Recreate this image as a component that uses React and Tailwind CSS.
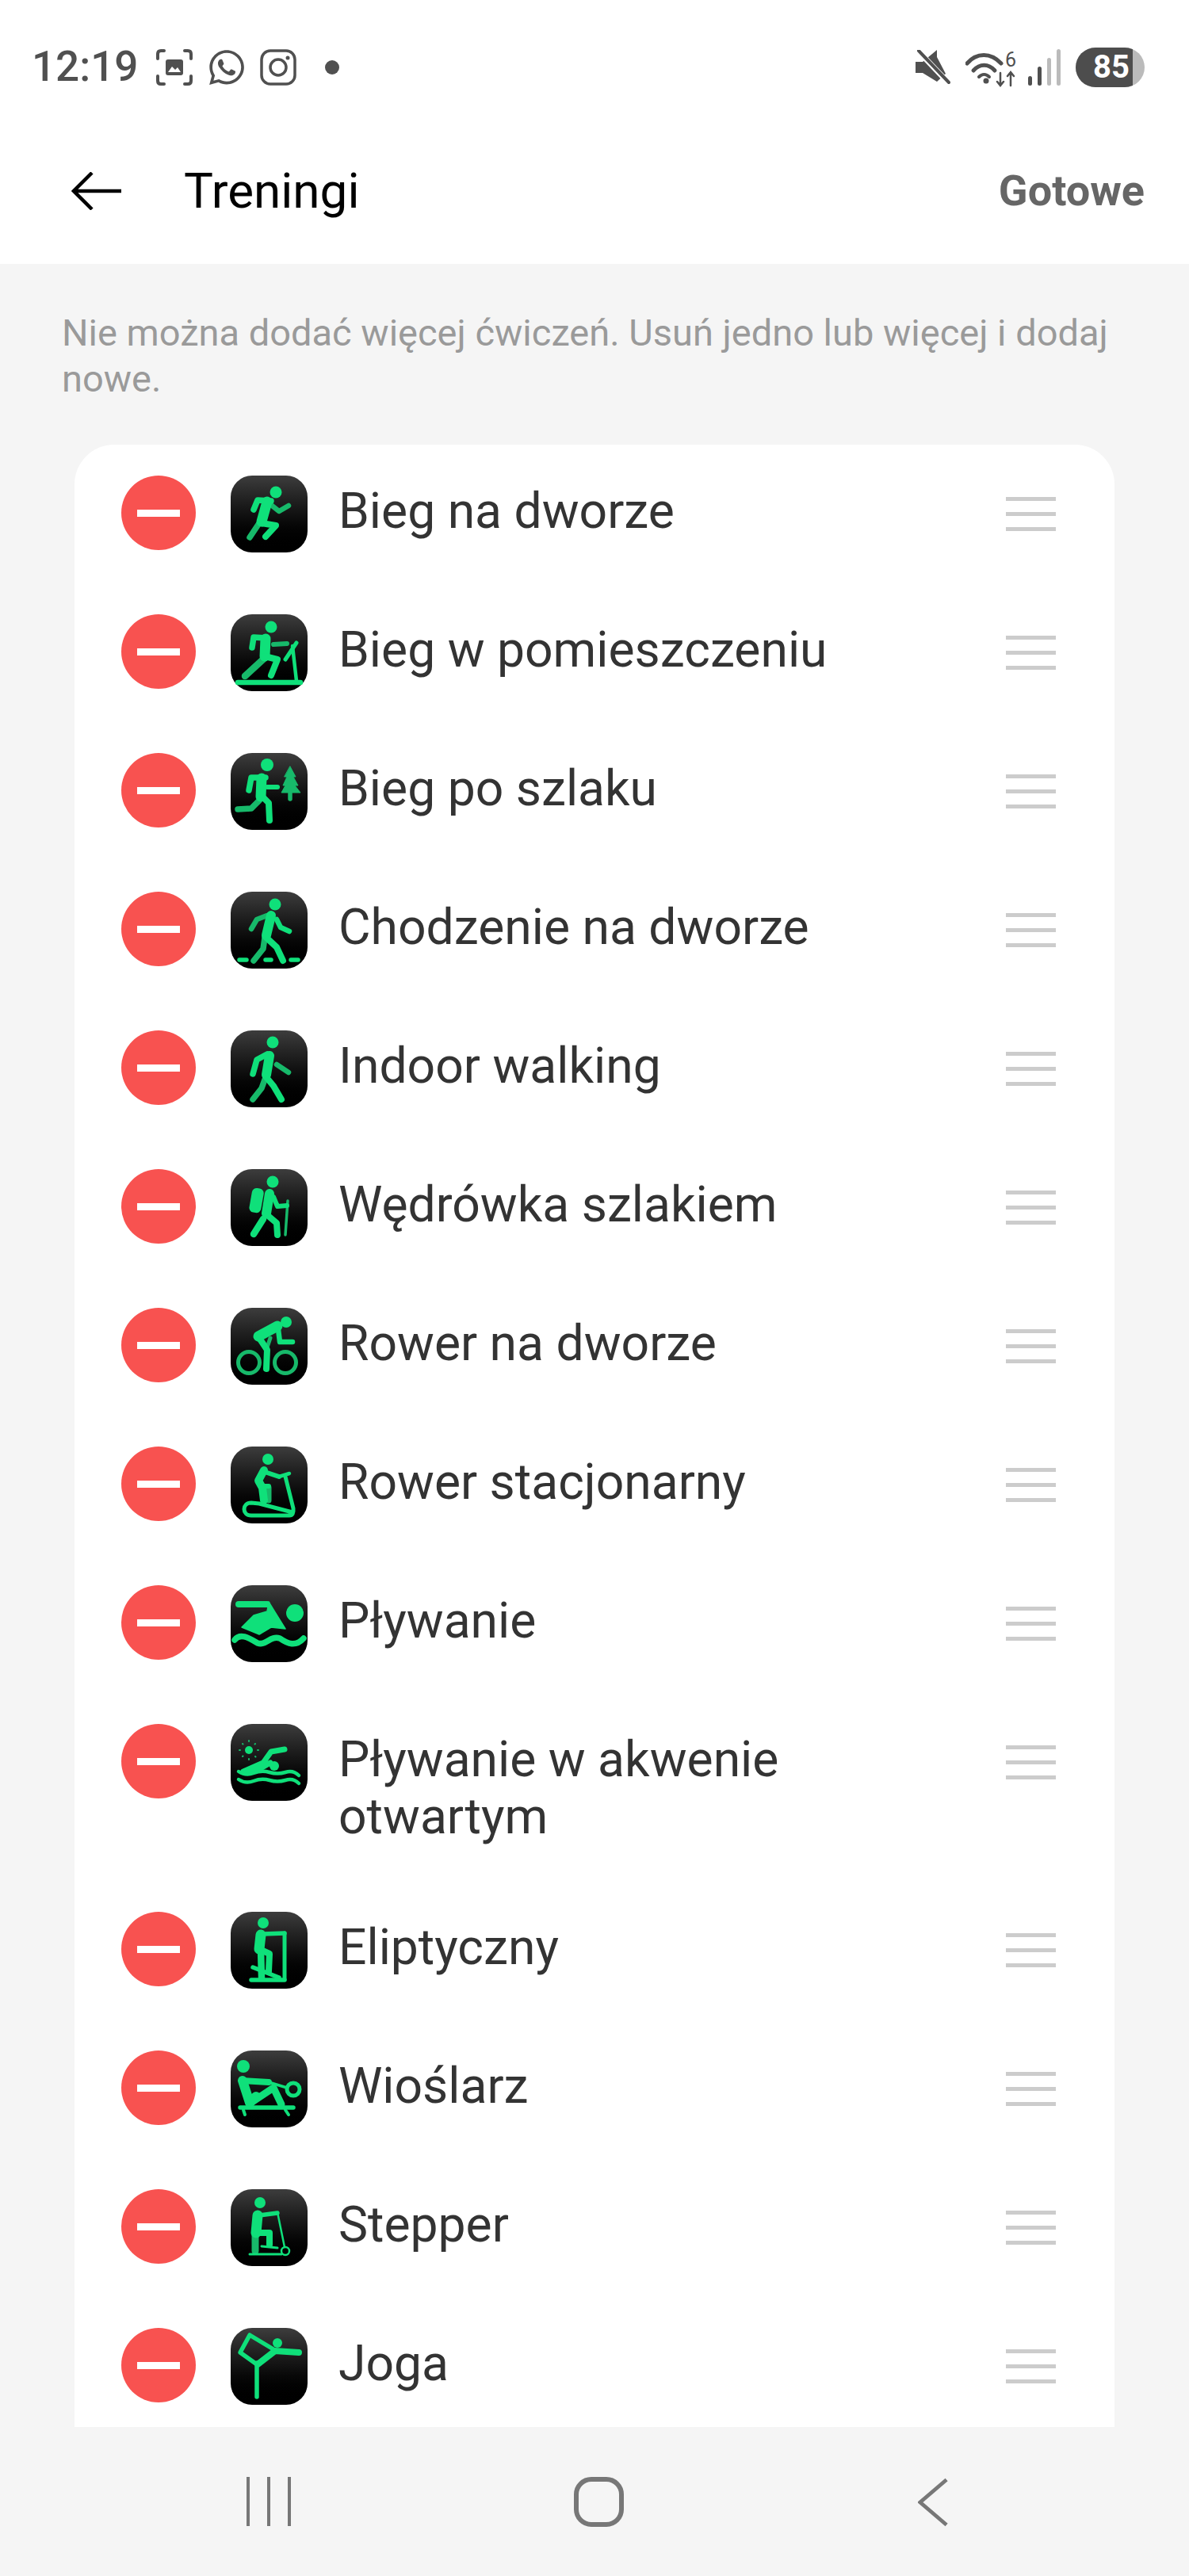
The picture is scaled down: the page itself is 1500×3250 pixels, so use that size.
import React from 'react';
import { FaWhatsapp } from 'react-icons/fa';

const G = '#0fe07a';
const D = '#17b96a';

// ikona treningu: ciemny kafelek z gradientem, rysunek w siatce 97x97
const Tile = ({ children }) => (
  <div className="w-[97px] h-[97px] shrink-0 rounded-[27px] bg-gradient-to-b from-[#3d3d3d] to-black">
    <svg viewBox="0 0 97 97" className="w-full h-full" fill="none" stroke={G} strokeWidth="7" strokeLinecap="round" strokeLinejoin="round">
      {children}
    </svg>
  </div>
);

const Head = ({ x, y, r = 7.5 }) => <circle cx={x} cy={y} r={r} fill={G} stroke="none" />;

const Run = () => (
  <Tile>
    <Head x={57} y={21} />
    <path d="M24 78 L38 57" stroke={D} strokeWidth="7.5" />
    <path d="M51 37 L61 45 L73 38" stroke={D} strokeWidth="6.5" />
    <path d="M29 43 L34 31 L51 32" strokeWidth="7.5" />
    <path d="M46 33 L39 58" strokeWidth="13" />
    <path d="M39 60 L57 63 L44 77" strokeWidth="8" />
  </Tile>
);

const Treadmill = () => (
  <Tile>
    <Head x={51} y={16} />
    <path d="M18 78 L43 55" stroke={D} strokeWidth="8.5" />
    <path d="M54 38 L71 37" stroke={D} strokeWidth="6" />
    <path d="M27 42 L29 29 L46 30" strokeWidth="7.5" />
    <path d="M44 31 L43 53" strokeWidth="13" />
    <path d="M43 53 L59 57 L51 77" strokeWidth="8" />
    <path d="M9 86 L88 86" strokeWidth="6.5" />
    <path d="M83 84 L78 40" strokeWidth="4.5" />
    <path d="M69 57 L83 36" strokeWidth="5" />
  </Tile>
);

const TrailRun = () => (
  <Tile>
    <Head x={46} y={15} r={8} />
    <path d="M9 71 L26 70 L36 60" stroke={D} strokeWidth="7.5" />
    <path d="M23 47 L26 31 L44 31" strokeWidth="7.5" />
    <path d="M39 32 L38 55" strokeWidth="13" />
    <path d="M46 43 L59 43" strokeWidth="6" />
    <path d="M37 52 L48 63 L49 85" strokeWidth="8" />
    <path d="M75 17 L82 30 L79 30 L85 41 L81 41 L88 50 L64 50 L69 41 L66 41 L71 30 L68 30 Z" fill={D} stroke={D} strokeWidth="1" />
    <path d="M75 50 L75 58" stroke={D} strokeWidth="5.5" />
  </Tile>
);

const WalkOutdoor = () => (
  <Tile>
    <Head x={56} y={16} />
    <path d="M43 58 L41 72 L29 87" stroke={D} strokeWidth="7.5" />
    <path d="M46 30 L33 35 L26 47" stroke={D} strokeWidth="6.5" />
    <path d="M51 30 L45 55" strokeWidth="12" />
    <path d="M58 35 L63 45 L74 50" strokeWidth="6.5" />
    <path d="M44 57 L58 70 L66 87" strokeWidth="8" />
    <path d="M11 86 L20 86 M44 86 L51 86 M76 86 L85 86" strokeWidth="5.5" />
  </Tile>
);

const WalkIndoor = () => (
  <Tile>
    <Head x={53} y={15} />
    <path d="M43 62 L39 73 L28 87" stroke={D} strokeWidth="7.5" />
    <path d="M58 43 L73 53" stroke={D} strokeWidth="6.5" />
    <path d="M28 55 L33 37 L46 30" strokeWidth="7.5" />
    <path d="M49 32 L45 56" strokeWidth="12" />
    <path d="M44 58 L54 70 L64 87" strokeWidth="8" />
  </Tile>
);

const Hike = () => (
  <Tile>
    <Head x={53} y={16} />
    <rect x="25" y="24" width="15" height="31" rx="6" fill={G} stroke="none" transform="rotate(10 32 40)" />
    <path d="M72 40 L69 83" stroke={D} strokeWidth="3.5" />
    <path d="M41 63 L29 82" strokeWidth="8.5" />
    <path d="M49 31 L45 56" strokeWidth="12" />
    <path d="M54 35 L59 47 L71 46" strokeWidth="6" />
    <path d="M45 57 L58 68 L59 83" strokeWidth="8" />
  </Tile>
);

const Bike = () => (
  <Tile>
    <Head x={70} y={18} r={7} />
    <circle cx="23" cy="69" r="13.5" stroke={D} strokeWidth="5" />
    <circle cx="69" cy="69" r="13.5" stroke={D} strokeWidth="5" />
    <path d="M35 36 L59 23" strokeWidth="13" />
    <path d="M60 27 L62 43 L78 43" strokeWidth="6.5" />
    <path d="M50 38 L46 50" stroke={D} strokeWidth="5" />
    <path d="M36 38 L46 53 L45 77" strokeWidth="8" />
  </Tile>
);

const StationaryBike = () => (
  <Tile>
    <Head x={47} y={16} r={7} />
    <path d="M43 32 L61 38" strokeWidth="6" />
    <path d="M61 38 L74 34" strokeWidth="4.5" />
    <path d="M69 38 L79 78 Q80 87 74 87 L26 87 C14 87 14 71 26 71 L36 72 L78 83" strokeWidth="5" />
    <path d="M48 52 L48 68" stroke={D} strokeWidth="7" />
    <path d="M42 30 L35 43 L40 52 L42 68" strokeWidth="10" />
    <path d="M39 50 L48 50" strokeWidth="6" />
  </Tile>
);

const Swim = () => (
  <Tile>
    <Head x={81} y={35} r={11} />
    <path d="M10 24 L46 24" strokeWidth="8" />
    <path d="M48 21 L69 55 L51 53 L36 62 L14 53 L29 38 L46 33 Z" fill={G} stroke={G} strokeWidth="1.5" />
    <path d="M5 69 C12 60 22 66 34 73 C44 77 50 63 62 67 C72 74 82 78 92 67" strokeWidth="7.5" />
  </Tile>
);

const OpenWater = () => (
  <Tile>
    <Head x={23} y={33} r={5} />
    <path d="M23 21 L23 22 M23 44 L23 45 M11 33 L12 33 M34 33 L35 33 M15 25 L15.5 25.5 M31 41 L31.5 41.5 M31 25 L30.5 25.5 M15 41 L15.5 40.5" stroke={D} strokeWidth="2" />
    <Head x={55} y={53} r={6} />
    <path d="M68 32 L51 35 L41 49 L16 60 L36 57 L50 49" strokeWidth="7" />
    <path d="M10 60 Q19 66 29 62 T49 61 T69 61 T86 65" strokeWidth="4.5" />
    <path d="M10 70 Q19 76 29 72 T49 71 T69 71 T86 75" strokeWidth="4.5" />
  </Tile>
);

const Elliptical = () => (
  <Tile>
    <Head x={41} y={14} r={7} />
    <path d="M41 28 L68 27" strokeWidth="5.5" />
    <path d="M68 27 L68 85" strokeWidth="5" />
    <path d="M38 29 L36 47" strokeWidth="13" />
    <path d="M36 47 L49 53 L48 75" strokeWidth="8" />
    <path d="M38 48 L39 83" strokeWidth="8.5" />
    <path d="M26 86 L68 86" strokeWidth="5.5" />
    <path d="M28 70 L61 83" strokeWidth="5.5" />
  </Tile>
);

const Rower = () => (
  <Tile>
    <Head x={16} y={20} r={8} />
    <circle cx="79" cy="49" r="8" strokeWidth="5" />
    <path d="M48 40 L71 47" strokeWidth="3.5" />
    <path d="M14 38 L48 40" strokeWidth="8" />
    <path d="M15 38 L24 66 L32 58" strokeWidth="12" />
    <path d="M24 67 L54 47 L64 68" strokeWidth="9" />
    <path d="M12 72 L79 72" strokeWidth="5.5" />
    <path d="M16 75 L18 81 M69 75 L73 81" strokeWidth="4" />
  </Tile>
);

const Stepper = () => (
  <Tile>
    <Head x={37} y={17} r={7} />
    <path d="M31 58 L31 78" stroke={D} strokeWidth="9" />
    <path d="M36 33 L59 30" strokeWidth="5.5" />
    <path d="M59 29 L68 73" strokeWidth="2.5" />
    <circle cx="69" cy="78" r="5" strokeWidth="2.5" />
    <path d="M34 33 L32 55" strokeWidth="13" />
    <path d="M33 55 L49 55 L49 70" strokeWidth="8" />
    <path d="M24 82 L64 82" strokeWidth="3" />
    <path d="M39 72 L59 74" strokeWidth="3" />
  </Tile>
);

const Yoga = () => (
  <Tile>
    <Head x={59} y={19} r={6} />
    <path d="M33 44 L33 87" strokeWidth="5.5" />
    <path d="M33 46 L12 31 L24 9 L54 27" strokeWidth="5.5" />
    <path d="M34 46 L56 29 L86 31" strokeWidth="8" />
  </Tile>
);

const workouts = [
  { name: 'Bieg na dworze', Icon: Run },
  { name: 'Bieg w pomieszczeniu', Icon: Treadmill },
  { name: 'Bieg po szlaku', Icon: TrailRun },
  { name: 'Chodzenie na dworze', Icon: WalkOutdoor },
  { name: 'Indoor walking', Icon: WalkIndoor },
  { name: 'Wędrówka szlakiem', Icon: Hike },
  { name: 'Rower na dworze', Icon: Bike },
  { name: 'Rower stacjonarny', Icon: StationaryBike },
  { name: 'Pływanie', Icon: Swim },
  { name: 'Pływanie w akwenie otwartym', Icon: OpenWater },
  { name: 'Eliptyczny', Icon: Elliptical },
  { name: 'Wioślarz', Icon: Rower },
  { name: 'Stepper', Icon: Stepper },
  { name: 'Joga', Icon: Yoga },
];

const StatusBar = () => (
  <div className="h-[162px] flex items-center justify-between pl-[40px] pr-[56px] pt-[7px] text-[#505050]">
    <div className="flex items-center">
      <span className="text-[53px] font-medium leading-none w-[156px]">12:19</span>
      <svg viewBox="0 0 48 48" className="w-[48px] h-[48px]" fill="none" stroke="currentColor" strokeWidth="4" strokeLinecap="round">
        <path d="M11 3 H7 Q3 3 3 7 V13 M37 3 H41 Q45 3 45 7 V13 M3 35 V41 Q3 45 7 45 H11 M45 35 V41 Q45 45 41 45 H37" />
        <rect x="13" y="14" width="22" height="20" rx="3" fill="currentColor" stroke="none" />
        <path d="M16 30 L21 23 L25 27 L28 24 L32 30 Z" fill="#fff" stroke="none" />
      </svg>
      <FaWhatsapp className="w-[50px] h-[50px] ml-[17px]" />
      <svg viewBox="0 0 46 46" className="w-[46px] h-[46px] ml-[17px]" fill="none" stroke="currentColor" strokeWidth="3.5">
        <rect x="2" y="2" width="42" height="42" rx="11" />
        <circle cx="23" cy="23" r="10" />
        <circle cx="35" cy="11" r="2.5" fill="currentColor" stroke="none" />
      </svg>
      <div className="w-[18px] h-[18px] rounded-full bg-[#505050] ml-[36px]" />
    </div>
    <div className="flex items-center">
      <svg viewBox="0 0 44 44" className="w-[44px] h-[44px]" fill="currentColor">
        <path d="M0 15 H9 L27 0 V9 L38 30 L27 40 L9 29 H0 Z" />
        <path d="M4 2 L42 42" stroke="#fff" strokeWidth="7" />
        <path d="M4 1 L42 41" stroke="currentColor" strokeWidth="4" strokeLinecap="round" />
      </svg>
      <svg viewBox="0 0 68 50" className="w-[68px] h-[50px] ml-[19px]" fill="none" stroke="currentColor" strokeLinecap="round">
        <path d="M2 20 C14 6 32 6 45 20" strokeWidth="5" />
        <path d="M10 29 C18 20 29 20 37 29" strokeWidth="5" />
        <path d="M17 37 C21 33 26 33 30 37" strokeWidth="4" />
        <circle cx="26" cy="42" r="3.5" fill="currentColor" stroke="none" />
        <path d="M44 32 V47 M40 43 L44 48 L48 43 M57 48 V31 M53 36 L57 31 L61 36" strokeWidth="2.5" />
        <text x="50" y="24" fontSize="25" fill="currentColor" stroke="none" fontFamily="Roboto, sans-serif">6</text>
      </svg>
      <div className="flex items-end gap-[7px] h-[46px] ml-[11px]">
        <div className="w-[5px] h-[12px] rounded-full bg-[#505050]" />
        <div className="w-[5px] h-[24px] rounded-full bg-[#505050]" />
        <div className="w-[5px] h-[35px] rounded-full bg-[#bbbbbb]" />
        <div className="w-[5px] h-[46px] rounded-full bg-[#bbbbbb]" />
      </div>
      <div className="w-[87px] h-[50px] ml-[19px] rounded-full overflow-hidden flex bg-[#bbbbbb]">
        <div className="w-[72px] bg-[#4d4d4d] text-white text-[40px] font-bold leading-[50px] text-right pr-[4px]">85</div>
      </div>
    </div>
  </div>
);

const Header = () => (
  <div className="h-[171px] flex items-center justify-between pl-[90px] pr-[56px] pb-[13px]">
    <div className="flex items-center">
      <svg viewBox="0 0 64 48" className="w-[64px] h-[48px]" fill="none" stroke="black" strokeWidth="4.5">
        <path d="M63 24 H3 M26 1 L3 24 L26 47" />
      </svg>
      <span className="ml-[78px] text-[62px] leading-none text-black">Treningi</span>
    </div>
    <span className="text-[54px] font-bold leading-none text-[#666666]">Gotowe</span>
  </div>
);

const Row = ({ name, Icon }) => (
  <div className="flex items-start min-h-[175px]">
    <div className="w-[94px] h-[94px] shrink-0 rounded-full bg-[#f85250] flex items-center justify-center">
      <div className="w-[54px] h-[9px] bg-white" />
    </div>
    <div className="ml-[44px]">
      <Icon />
    </div>
    <div className="ml-[39px] flex-1 pt-[9px] pb-[84px] text-[62.4px] leading-[72px] text-[#333333] max-w-[640px]">{name}</div>
    <div className="ml-auto h-[97px] flex flex-col justify-center gap-[14px]">
      <div className="w-[63px] h-[5px] bg-[#cccccc]" />
      <div className="w-[63px] h-[5px] bg-[#cccccc]" />
      <div className="w-[63px] h-[5px] bg-[#cccccc]" />
    </div>
  </div>
);

const App = () => (
  <div className="w-[1500px] h-[3250px] overflow-hidden flex flex-col bg-[#f5f5f5] font-['Roboto',sans-serif]">
    <div className="bg-white">
      <StatusBar />
      <Header />
    </div>
    <div className="flex-1 min-h-0 flex flex-col">
      <p className="pl-[78px] pr-[80px] pt-[58px] text-[47px] leading-[58px] text-[#9a9a9a]">
        Nie można dodać więcej ćwiczeń. Usuń jedno lub więcej i dodaj nowe.
      </p>
      <div className="mt-[54px] ml-[94px] w-[1312px] flex-1 min-h-0 overflow-hidden rounded-t-[50px] bg-white pt-[39px] pl-[59px] pr-[74px]">
        {workouts.map((w) => (
          <Row key={w.name} name={w.name} Icon={w.Icon} />
        ))}
      </div>
    </div>
    <div className="h-[188px] shrink-0 flex items-start pt-[63px]">
      <div className="ml-[311px] flex gap-[22px] h-[62px]">
        <div className="w-[4px] h-full bg-[#777777]" />
        <div className="w-[4px] h-full bg-[#777777]" />
        <div className="w-[4px] h-full bg-[#777777]" />
      </div>
      <div className="ml-[357px] w-[63px] h-[63px] border-[6px] border-[#777777] rounded-[22px]" />
      <svg viewBox="0 0 40 64" className="ml-[371px] w-[38px] h-[64px]" fill="none" stroke="#777777" strokeWidth="5">
        <path d="M38 2 L3 32 L38 62" />
      </svg>
    </div>
  </div>
);

export default App;
